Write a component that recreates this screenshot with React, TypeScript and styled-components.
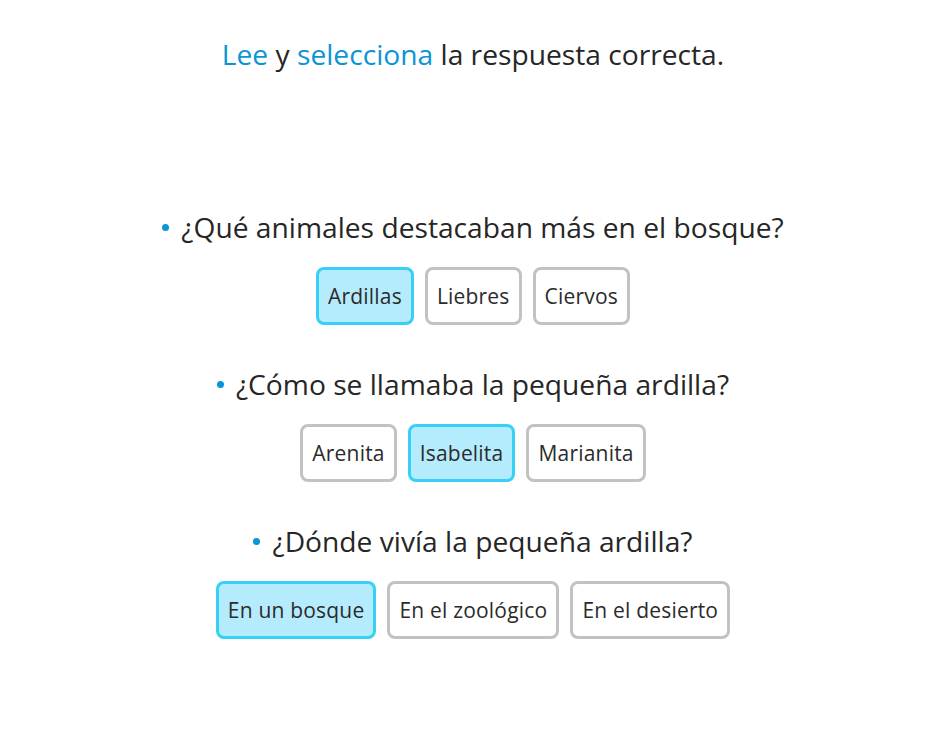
import React from "react";
import styled, { createGlobalStyle } from "styled-components";

const Global = createGlobalStyle`
  html, body { margin: 0; padding: 0; background: #ffffff; }
  body { font-family: "Open Sans", "Noto Sans", sans-serif; color: #262626; }
`;

const Page = styled.div`
  width: 946px;
  min-height: 747px;
  display: flex;
  flex-direction: column;
  align-items: center;
`;

const Title = styled.h1`
  margin: 36px 0 0;
  font-size: 28.2px;
  font-weight: 400;
  line-height: 36px;
  text-align: center;
`;

const Accent = styled.span`
  color: #0a95d6;
`;

const Questions = styled.div`
  margin-top: 137px;
  display: flex;
  flex-direction: column;
  align-items: center;
  gap: 41px;
`;

const Block = styled.div`
  display: flex;
  flex-direction: column;
  align-items: center;
  gap: 22px;
`;

const Question = styled.div`
  display: flex;
  align-items: center;
  gap: 12px;
  font-size: 28.2px;
  line-height: 36px;
`;

const Bullet = styled.span`
  width: 7px;
  height: 7px;
  border-radius: 50%;
  background: #0a95d6;
  flex: none;
`;

const Options = styled.div`
  display: flex;
  gap: 11px;
`;

const Option = styled.button<{ $selected?: boolean }>`
  height: 58px;
  padding: 0 9px;
  border: 3px solid ${(p) => (p.$selected ? "#38d1f5" : "#c2c2c2")};
  background: ${(p) => (p.$selected ? "#b5ecfd" : "#ffffff")};
  border-radius: 8px;
  font-family: inherit;
  font-size: 21px;
  letter-spacing: 0.2px;
  color: #2b2b2b;
  cursor: pointer;
`;

const data = [
  {
    q: "¿Qué animales destacaban más en el bosque?",
    options: ["Ardillas", "Liebres", "Ciervos"],
    sel: 0,
  },
  {
    q: "¿Cómo se llamaba la pequeña ardilla?",
    options: ["Arenita", "Isabelita", "Marianita"],
    sel: 1,
  },
  {
    q: "¿Dónde vivía la pequeña ardilla?",
    options: ["En un bosque", "En el zoológico", "En el desierto"],
    sel: 0,
  },
];

export default function App() {
  return (
    <Page>
      <Global />
      <Title>
        <Accent>Lee</Accent> y <Accent>selecciona</Accent> la respuesta correcta.
      </Title>
      <Questions>
        {data.map((d) => (
          <Block key={d.q}>
            <Question>
              <Bullet />
              {d.q}
            </Question>
            <Options>
              {d.options.map((o, i) => (
                <Option key={o} $selected={i === d.sel}>
                  {o}
                </Option>
              ))}
            </Options>
          </Block>
        ))}
      </Questions>
    </Page>
  );
}
